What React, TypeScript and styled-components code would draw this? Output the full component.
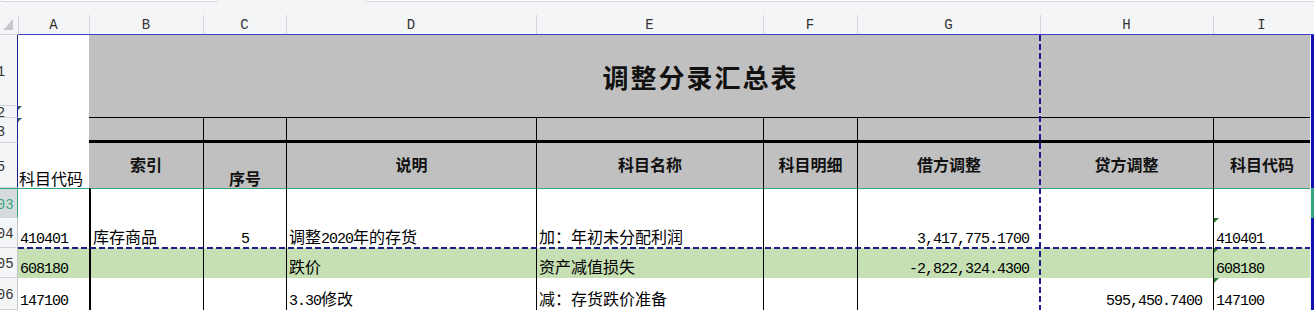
import { Fragment } from "react";
import styled, { createGlobalStyle, css } from "styled-components";

type Rule = "none" | "thin" | "thick";
type Align = "left" | "center" | "right";
type Tone = "sel" | "active" | "plain";

interface CellData {
  text?: string;
  align?: Align;
}

interface BodyRow {
  id: string;
  active?: boolean;
  fill?: boolean;
  cells: CellData[];
}

const COLUMNS = ["A", "B", "C", "D", "E", "F", "G", "H", "I"];
// line drawn on the left edge of each column, body rows
const BODY_RULES: Rule[] = ["none", "thick", "thin", "thin", "thin", "thin", "thin", "none", "thin"];
// header bands start at column B
const HEAD_RULES: Rule[] = ["none", "thin", "thin", "thin", "thin", "thin", "none", "thin"];

const HEADINGS = ["索引", "序号", "说明", "科目名称", "科目明细", "借方调整", "贷方调整", "科目代码"];

const bodyRows: BodyRow[] = [
  { id: "103", active: true, cells: [] },
  {
    id: "104",
    cells: [
      { text: "410401" },
      { text: "库存商品" },
      { text: "5", align: "center" },
      { text: "调整2020年的存货" },
      { text: "加：年初未分配利润" },
      {},
      { text: "3,417,775.1700", align: "right" },
      {},
      { text: "410401" },
    ],
  },
  {
    id: "105",
    fill: true,
    cells: [
      { text: "608180" },
      {},
      {},
      { text: "跌价" },
      { text: "资产减值损失" },
      {},
      { text: "-2,822,324.4300", align: "right" },
      {},
      { text: "608180" },
    ],
  },
  {
    id: "106",
    cells: [
      { text: "147100" },
      {},
      {},
      { text: "3.30修改" },
      { text: "减：存货跌价准备" },
      {},
      {},
      { text: "595,450.7400", align: "right" },
      { text: "147100" },
    ],
  },
];

function renderText(text: string) {
  return text
    .split(/([-0-9.,]+)/)
    .filter((part) => part !== "")
    .map((part, i) =>
      /^[-0-9.,]+$/.test(part) ? <Num key={i}>{part}</Num> : <Fragment key={i}>{part}</Fragment>
    );
}

export default function App() {
  return (
    <Window>
      <GlobalStyle />
      <TopBar>
        <NameBox />
        <FormulaBox />
      </TopBar>
      <Sheet>
        <Corner>
          <svg width="18" height="21" viewBox="0 0 18 21">
            <polygon points="13,6 13,17 3,17" fill="#c6c8cc" />
          </svg>
        </Corner>
        {COLUMNS.map((col) => (
          <ColHead key={col}>{col}</ColHead>
        ))}
        <EdgeHead />

        <CodeHeader>科目代码</CodeHeader>
        <TitleCell>调整分录汇总表</TitleCell>

        <RowHead $tone="sel">
          <RowLabel>1</RowLabel>
        </RowHead>
        <Edge $tone="sel" />

        <RowHead $tone="sel">
          <RowLabel>2</RowLabel>
        </RowHead>
        <Edge $tone="sel" />

        <RowHead $tone="sel">
          <RowLabel>3</RowLabel>
        </RowHead>
        {HEAD_RULES.map((rule, i) => (
          <BandCell key={i} $rule={rule} />
        ))}
        <Edge $tone="sel" />

        <RowHead $tone="sel">
          <RowLabel>5</RowLabel>
        </RowHead>
        {HEADINGS.map((label, i) => (
          <HeadCell key={i} $rule={HEAD_RULES[i]} $low={label === "序号"}>
            {label}
          </HeadCell>
        ))}
        <Edge $tone="sel" />

        {bodyRows.map((row) => (
          <Fragment key={row.id}>
            <RowHead $tone={row.active ? "active" : "plain"}>
              <RowLabel>{row.id}</RowLabel>
            </RowHead>
            {COLUMNS.map((col, i) => {
              const cell = row.cells[i] ?? {};
              return (
                <BodyCell
                  key={col}
                  $rule={BODY_RULES[i]}
                  $align={cell.align ?? "left"}
                  $fill={!!row.fill}
                  $active={!!row.active}
                  $flag={col === "I" && !!cell.text}
                >
                  {cell.text && <CellText>{renderText(cell.text)}</CellText>}
                </BodyCell>
              );
            })}
            <Edge $tone={row.active ? "active" : "sel"} />
          </Fragment>
        ))}

        <PageBreakV />
        <PageBreakH />
      </Sheet>
    </Window>
  );
}

const GlobalStyle = createGlobalStyle`
  *, *::before, *::after { box-sizing: border-box; }
  html, body { margin: 0; padding: 0; background: #f4f5f7; overflow: hidden; }
`;

const HEAD_BG = "#f4f5f7";
const GRAY = "#c0c0c0";
const NAVY = "#1c1c8e";
const TEAL = "#36a383";

const Window = styled.div`
  width: 1314px;
  height: 310px;
  overflow: hidden;
  background: ${HEAD_BG};
  font-family: "Noto Sans CJK SC", "Liberation Sans", sans-serif;
  color: #000;
`;

const TopBar = styled.div`
  display: flex;
  gap: 147px;
  height: 13px;
`;

const NameBox = styled.div`
  width: 218px;
  height: 2px;
  background: #fff;
  border: 1px solid #d3d6db;
  border-top: none;
  border-radius: 0 0 3px 3px;
`;

const FormulaBox = styled.div`
  flex: 1;
  height: 2px;
  background: #fff;
  border-bottom: 1px solid #d3d6db;
  border-left: 1px solid #d3d6db;
  border-radius: 0 0 0 3px;
`;

const Sheet = styled.div`
  position: relative;
  display: grid;
  grid-template-columns: 18px 71px 114px 83px 250px 227px 94px 183px 173px 97px 4px;
  grid-template-rows: 22px 71px 12px 25px 45px 30px 30px 30px 32px;
`;

const Corner = styled.div`
  border-bottom: 1px solid #d3d5d9;
  line-height: 0;
`;

const ColHead = styled.div`
  display: flex;
  align-items: center;
  justify-content: center;
  padding-top: 3px;
  font: 14px "Liberation Mono", monospace;
  color: #333;
  border-bottom: 1px solid #4040c4;
  background: linear-gradient(#d3d5d9, #d3d5d9) left 2px / 1px calc(100% - 2px) no-repeat;
`;

const EdgeHead = styled.div`
  border-bottom: 1px solid #4040c4;
`;

const RowHead = styled.div<{ $tone: Tone }>`
  display: flex;
  align-items: center;
  overflow: hidden;
  padding-top: 3px;
  font: 14px/14px "Liberation Mono", monospace;
  color: ${(p) => (p.$tone === "active" ? TEAL : "#333")};
  background: ${(p) => (p.$tone === "active" ? "#d6dcdb" : HEAD_BG)};
  border-bottom: 1px solid #d3d5d9;
  border-right: 1px solid
    ${(p) => (p.$tone === "sel" ? NAVY : p.$tone === "active" ? TEAL : "#c3c6cc")};
  ${(p) =>
    p.$tone === "active" &&
    css`
      border-top: 1px solid ${TEAL};
    `}
`;

const RowLabel = styled.span`
  flex: none;
  width: 30px;
  margin-left: -14px;
  text-align: center;
`;

const CodeHeader = styled.div`
  grid-column: 2;
  grid-row: 2 / 6;
  position: relative;
  display: flex;
  align-items: flex-end;
  padding: 0 0 0 1px;
  background: #fff;
  font-size: 16px;
  line-height: 19px;

  &::before,
  &::after {
    content: "";
    position: absolute;
    left: 0;
    border-top: 4px solid #2d5f73;
    border-right: 4px solid transparent;
  }
  &::before {
    top: 71px;
  }
  &::after {
    top: 83px;
  }
`;

const TitleCell = styled.div`
  grid-column: 3 / 11;
  grid-row: 2 / 4;
  display: flex;
  align-items: center;
  justify-content: center;
  padding-left: 2px;
  background: ${GRAY};
  border-bottom: 1px solid #000;
  font-size: 26px;
  font-weight: 700;
  letter-spacing: 2px;
  color: #111;
`;

const ruleCss = (rule: Rule) =>
  rule === "thick"
    ? css`
        border-left: 2px solid #000;
      `
    : rule === "thin"
    ? css`
        border-left: 1px solid #000;
      `
    : null;

const BandCell = styled.div<{ $rule: Rule }>`
  background: ${GRAY};
  border-bottom: 3px solid #000;
  ${(p) => ruleCss(p.$rule)}
`;

const HeadCell = styled.div<{ $rule: Rule; $low: boolean }>`
  display: flex;
  justify-content: center;
  align-items: ${(p) => (p.$low ? "flex-end" : "center")};
  padding-bottom: ${(p) => (p.$low ? "0" : "3px")};
  background: ${GRAY};
  font-size: 16px;
  line-height: 20px;
  font-weight: 700;
  color: #111;
  ${(p) => ruleCss(p.$rule)}
`;

const BodyCell = styled.div<{
  $rule: Rule;
  $align: Align;
  $fill: boolean;
  $active: boolean;
  $flag: boolean;
}>`
  position: relative;
  display: flex;
  align-items: flex-end;
  justify-content: ${(p) =>
    p.$align === "right" ? "flex-end" : p.$align === "center" ? "center" : "flex-start"};
  padding: 0 ${(p) => (p.$align === "right" ? "11px" : "0")} 2px
    ${(p) => (p.$align === "left" ? "2px" : "0")};
  font-size: 16px;
  white-space: nowrap;
  overflow: hidden;
  background: ${(p) => (p.$fill ? "#c6e0b4" : "#fff")};
  ${(p) => ruleCss(p.$rule)}
  ${(p) =>
    p.$active &&
    css`
      border-top: 1px solid ${TEAL};
    `}
  ${(p) =>
    p.$flag &&
    css`
      &::before {
        content: "";
        position: absolute;
        top: 0;
        left: 0;
        border-top: 5px solid #2f7d32;
        border-right: 5px solid transparent;
      }
    `}
`;

const CellText = styled.span`
  display: block;
  line-height: 19px;
`;

const Num = styled.span`
  font-family: "Liberation Mono", monospace;
  font-size: 15px;
  line-height: 0;
  letter-spacing: -1px;
`;

const Edge = styled.div<{ $tone: Tone }>`
  background: ${(p) => (p.$tone === "active" ? TEAL : "#1212b4")};
  border-left: 1px solid ${HEAD_BG};
`;

const PageBreakV = styled.div`
  position: absolute;
  grid-column: 9 / 10;
  grid-row: 2 / 10;
  top: 0;
  bottom: 0;
  left: -1px;
  width: 2px;
  z-index: 2;
  background: repeating-linear-gradient(to bottom, ${NAVY} 0 6px, transparent 6px 9px);
`;

const PageBreakH = styled.div`
  position: absolute;
  grid-column: 2 / 11;
  grid-row: 7 / 8;
  left: 0;
  right: 0;
  bottom: -1px;
  height: 2px;
  z-index: 2;
  background: repeating-linear-gradient(to right, ${NAVY} 0 6px, transparent 6px 9px);
`;
